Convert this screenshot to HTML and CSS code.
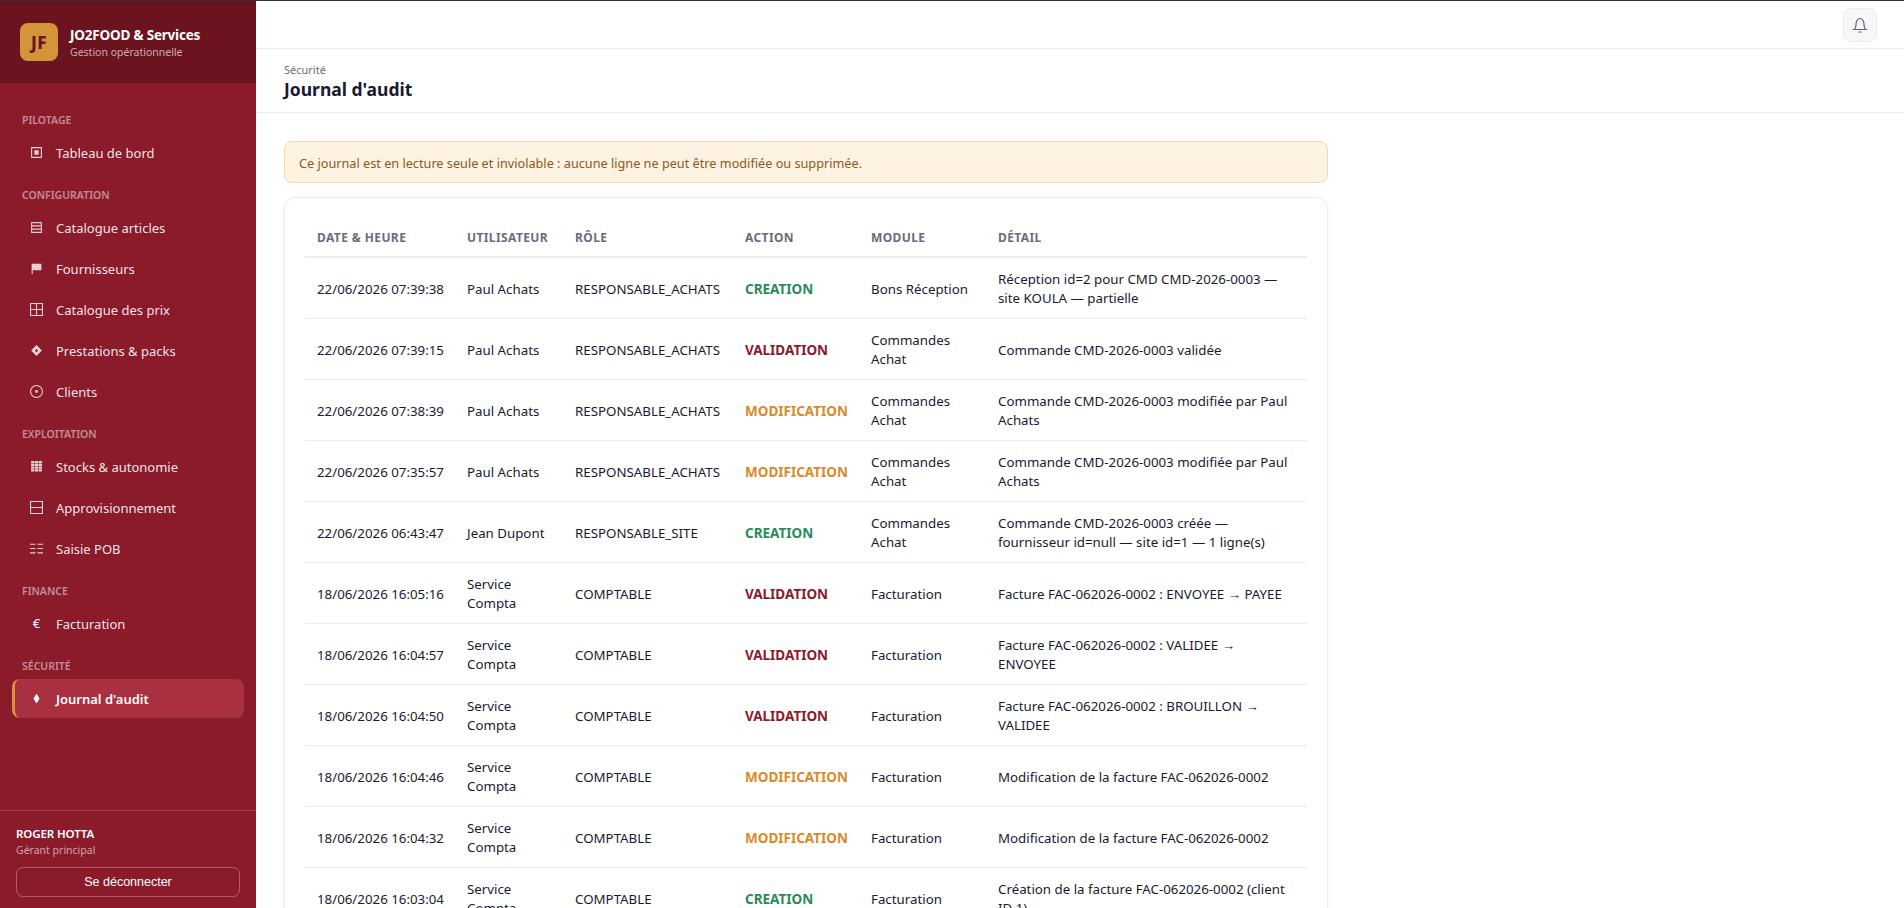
FILE: index.html
```html
<!DOCTYPE html>
<html lang="fr">
<head>
<meta charset="utf-8">
<title>Journal d'audit</title>
<link rel="stylesheet" href="styles.css">
</head>
<body>
<div class="topline"></div>
<div class="app">
  <aside class="sidebar">
    <div class="brand">
      <div class="logo">JF</div>
      <div>
        <div class="brand-name">JO2FOOD &amp; Services</div>
        <div class="brand-sub">Gestion opérationnelle</div>
      </div>
    </div>
    <nav class="nav">
      <div class="nav-label">PILOTAGE</div>
      <a class="nav-item"><svg class="ico" viewBox="0 0 12 12"><path fill="currentColor" fill-rule="evenodd" d="M1 1h10v10H1zM2 2v8h8V2zM4 4h4v4H4z"/></svg>Tableau de bord</a>
      <div class="nav-label">CONFIGURATION</div>
      <a class="nav-item"><svg class="ico" viewBox="0 0 12 12"><path fill="none" stroke="currentColor" d="M1.500 1.500h9v9h-9zM1.500 4.500h9M1.500 7.500h9"/></svg>Catalogue articles</a>
      <a class="nav-item"><svg class="ico" viewBox="0 0 12 12"><path fill="currentColor" d="M1.500 1.500h9v6h-8v3.500h-1z"/></svg>Fournisseurs</a>
      <a class="nav-item"><svg class="ico" viewBox="0 0 12 12"><path fill="none" stroke="currentColor" d="M.5.500h11v11H.5zM6 .5v11M.5 6h11"/></svg>Catalogue des prix</a>
      <a class="nav-item"><svg class="ico" viewBox="0 0 12 12"><path fill="currentColor" fill-rule="evenodd" d="M6 1l5 5-5 5-5-5zM6 4.500L4.500 6 6 7.500 7.500 6z"/></svg>Prestations &amp; packs</a>
      <a class="nav-item"><svg class="ico" viewBox="0 0 12 12"><circle cx="6" cy="6" r="5.500" fill="none" stroke="currentColor"/><circle cx="6" cy="6" r="1.300" fill="currentColor"/></svg>Clients</a>
      <div class="nav-label">EXPLOITATION</div>
      <a class="nav-item"><svg class="ico" viewBox="0 0 12 12"><path fill="currentColor" d="M1 1h3v2H1zM4.500 1h3v2h-3zM8 1h3v2H8zM1 3.500h3v2H1zM4.500 3.500h3v2h-3zM8 3.500h3v2H8zM1 6h3v2H1zM4.500 6h3v2h-3zM8 6h3v2H8zM1 8.500h3v2H1zM4.500 8.500h3v2h-3zM8 8.500h3v2H8z"/></svg>Stocks &amp; autonomie</a>
      <a class="nav-item"><svg class="ico" viewBox="0 0 12 12"><path fill="none" stroke="currentColor" d="M.5.500h11v11H.5zM.5 6h11"/></svg>Approvisionnement</a>
      <a class="nav-item"><svg class="ico" viewBox="0 0 12 12"><path fill="none" stroke="currentColor" d="M0 2h5M7 2h5M0 6h5M7 6h5M0 10h5M7 10h5"/></svg>Saisie POB</a>
      <div class="nav-label">FINANCE</div>
      <a class="nav-item"><span class="ico euro">€</span>Facturation</a>
      <div class="nav-label">SÉCURITÉ</div>
      <a class="nav-item active"><svg class="ico" viewBox="0 0 12 12"><path fill="currentColor" d="M6 1.500L8.800 6 6 10.500 3.200 6z"/></svg>Journal d'audit</a>
    </nav>
    <div class="user">
      <div class="user-name">ROGER HOTTA</div>
      <div class="user-role">Gérant principal</div>
      <button class="logout">Se déconnecter</button>
    </div>
  </aside>
  <div class="main">
    <header class="topbar">
      <button class="bell"><svg viewBox="0 0 16 16" width="16" height="16"><path fill="none" stroke="#5f5f70" stroke-width="1.200" d="M.8 12.500h14.400M2.800 12.500c.9-1.500 1.200-3 1.200-5.300C4 4.200 5.700 1.500 8 1.500s4 2.700 4 5.700c0 2.300.3 3.800 1.200 5.300M6.500 15h3"/></svg></button>
    </header>
    <div class="pagehead">
      <div class="crumb">Sécurité</div>
      <h1 class="title">Journal d'audit</h1>
    </div>
    <div class="content">
      <div class="alert">Ce journal est en lecture seule et inviolable : aucune ligne ne peut être modifiée ou supprimée.</div>
      <div class="card">
        <table class="table">
          <colgroup><col class="c1"><col class="c2"><col class="c3"><col class="c4"><col class="c5"><col></colgroup>
          <thead><tr><th>DATE &amp; HEURE</th><th>UTILISATEUR</th><th>RÔLE</th><th>ACTION</th><th>MODULE</th><th>DÉTAIL</th></tr></thead>
          <tbody>
            <tr><td class="nw">22/06/2026 07:39:38</td><td>Paul Achats</td><td class="nw">RESPONSABLE_ACHATS</td><td class="a-create">CREATION</td><td>Bons Réception</td><td>Réception id=2 pour CMD CMD-2026-0003 — site KOULA — partielle</td></tr>
            <tr><td class="nw">22/06/2026 07:39:15</td><td>Paul Achats</td><td class="nw">RESPONSABLE_ACHATS</td><td class="a-valid">VALIDATION</td><td>Commandes Achat</td><td>Commande CMD-2026-0003 validée</td></tr>
            <tr><td class="nw">22/06/2026 07:38:39</td><td>Paul Achats</td><td class="nw">RESPONSABLE_ACHATS</td><td class="a-modif">MODIFICATION</td><td>Commandes Achat</td><td>Commande CMD-2026-0003 modifiée par Paul Achats</td></tr>
            <tr><td class="nw">22/06/2026 07:35:57</td><td>Paul Achats</td><td class="nw">RESPONSABLE_ACHATS</td><td class="a-modif">MODIFICATION</td><td>Commandes Achat</td><td>Commande CMD-2026-0003 modifiée par Paul Achats</td></tr>
            <tr><td class="nw">22/06/2026 06:43:47</td><td>Jean Dupont</td><td class="nw">RESPONSABLE_SITE</td><td class="a-create">CREATION</td><td>Commandes Achat</td><td>Commande CMD-2026-0003 créée — fournisseur id=null — site id=1 — 1 ligne(s)</td></tr>
            <tr><td class="nw">18/06/2026 16:05:16</td><td>Service Compta</td><td class="nw">COMPTABLE</td><td class="a-valid">VALIDATION</td><td>Facturation</td><td>Facture FAC-062026-0002 : ENVOYEE → PAYEE</td></tr>
            <tr><td class="nw">18/06/2026 16:04:57</td><td>Service Compta</td><td class="nw">COMPTABLE</td><td class="a-valid">VALIDATION</td><td>Facturation</td><td>Facture FAC-062026-0002 : VALIDEE → ENVOYEE</td></tr>
            <tr><td class="nw">18/06/2026 16:04:50</td><td>Service Compta</td><td class="nw">COMPTABLE</td><td class="a-valid">VALIDATION</td><td>Facturation</td><td>Facture FAC-062026-0002 : BROUILLON → VALIDEE</td></tr>
            <tr><td class="nw">18/06/2026 16:04:46</td><td>Service Compta</td><td class="nw">COMPTABLE</td><td class="a-modif">MODIFICATION</td><td>Facturation</td><td>Modification de la facture FAC-062026-0002</td></tr>
            <tr><td class="nw">18/06/2026 16:04:32</td><td>Service Compta</td><td class="nw">COMPTABLE</td><td class="a-modif">MODIFICATION</td><td>Facturation</td><td>Modification de la facture FAC-062026-0002</td></tr>
            <tr><td class="nw">18/06/2026 16:03:04</td><td>Service Compta</td><td class="nw">COMPTABLE</td><td class="a-create">CREATION</td><td>Facturation</td><td>Création de la facture FAC-062026-0002 (client ID 1)</td></tr>
          </tbody>
        </table>
      </div>
    </div>
  </div>
</div>
</body>
</html>
```

FILE: styles.css
```css
* { box-sizing: border-box; }
html, body { margin: 0; height: 100%; overflow: hidden; }
body {
  font-family: "Noto Sans", "Open Sans", sans-serif;
  color: #1a1a2e;
  background: #fff;
  display: flex;
  flex-direction: column;
}
.topline { height: 1px; background: #333; flex: none; }
.app { flex: 1; display: flex; min-height: 0; }
.sidebar {
  width: 256px;
  flex: none;
  background: #8b1a2b;
  display: flex;
  flex-direction: column;
  color: #fff;
}
.brand {
  height: 82px;
  background: #6b141f;
  display: flex;
  align-items: center;
  gap: 12px;
  padding: 0 20px;
  flex: none;
}
.logo {
  width: 38px;
  height: 38px;
  border-radius: 8px;
  background: #d4943a;
  color: #6b141f;
  font-weight: 800;
  font-size: 17px;
  letter-spacing: .5px;
  display: flex;
  align-items: center;
  justify-content: center;
}
.brand-name { font-size: 13.500px; font-weight: 700; line-height: 19px; letter-spacing: -.2px; }
.brand-sub { font-size: 10.500px; line-height: 14px; color: rgba(255,255,255,.65); }
.nav { flex: 1; padding: 30px 12px 0; }
.nav-label {
  font-size: 10.500px;
  font-weight: 600;
  line-height: 14px;
  color: rgba(255,255,255,.5);
  padding-left: 10px;
  margin: 0 0 6px;
}
.nav-item {
  display: flex;
  align-items: center;
  height: 39px;
  margin-bottom: 2px;
  padding-left: 15px;
  font-size: 13px;
  border-radius: 8px;
  color: rgba(255,255,255,.9);
  border-left: 3px solid transparent;
}
.nav-item + .nav-label { margin-top: 16px; }
.ico { width: 13px; height: 13px; margin-right: 13px; flex: none; color: rgba(255,255,255,.8); }
.euro { font-size: 13px; line-height: 13px; text-align: center; color: #fff; }
.nav-item.active {
  background: #a83040;
  border-left-color: #d4943a;
  color: #fff;
  font-weight: 600;
}
.nav-item.active .ico { color: #fff; }
.user {
  flex: none;
  height: 98px;
  border-top: 1px solid rgba(255,255,255,.15);
  padding: 14px 16px 0;
}
.user-name { font-size: 11.500px; font-weight: 600; line-height: 17px; letter-spacing: -.1px; }
.user-role { font-size: 10.500px; line-height: 17px; color: rgba(255,255,255,.6); margin-bottom: 8px; }
.logout {
  display: block;
  width: 100%;
  height: 30px;
  border: 1px solid rgba(255,255,255,.3);
  border-radius: 7px;
  background: transparent;
  color: #fff;
  font-family: "Liberation Sans", sans-serif;
  font-size: 12.500px;
}
.main { flex: 1; min-width: 0; display: flex; flex-direction: column; overflow: hidden; }
.topbar {
  height: 48px;
  flex: none;
  border-bottom: 1px solid #ebebf0;
  display: flex;
  align-items: center;
  justify-content: flex-end;
  padding: 0 27px 0 0;
}
.bell {
  width: 34px;
  height: 34px;
  padding: 0;
  border: 1px solid #ebebf0;
  border-radius: 8px;
  background: #f7f7fa;
  display: flex;
  align-items: center;
  justify-content: center;
}
.pagehead {
  height: 64px;
  flex: none;
  border-bottom: 1px solid #ebebf0;
  padding: 13px 28px 0;
}
.crumb { font-size: 11px; line-height: 15px; color: #6b6b7b; }
.title { margin: 0; font-size: 17.500px; line-height: 25px; font-weight: 700; color: #1a1a2e; }
.content { padding: 28px; width: 1100px; flex: none; }
.alert {
  height: 42px;
  display: flex;
  align-items: center;
  padding: 2px 14px 0;
  background: #fef3e2;
  border: 1px solid #f5d9a8;
  border-radius: 8px;
  color: #8a5a1a;
  font-size: 12.700px;
  margin-bottom: 14px;
}
.card {
  border: 1px solid #ebebf0;
  border-radius: 12px;
  padding: 20px;
  box-shadow: 0 1px 6px rgba(0,0,0,.05);
}
.table { width: 100%; border-collapse: collapse; table-layout: fixed; font-size: 13.300px; }
.c1 { width: 150px; }
.c2 { width: 108px; }
.c3 { width: 170px; }
.c4 { width: 126px; }
.c5 { width: 127px; }
.table th {
  height: 39px;
  text-align: left;
  font-size: 12px;
  letter-spacing: .4px;
  font-weight: 700;
  color: #6b6b7b;
  padding: 0 12px;
  border-bottom: 2px solid #ebebf0;
  white-space: nowrap;
}
.table td {
  padding: 12px 12px 10px;
  line-height: 19px;
  border-bottom: 1px solid #ebebf0;
  vertical-align: middle;
}
.table td.nw { white-space: nowrap; }
.a-create, .a-valid, .a-modif { font-weight: 700; font-size: 13.500px; }
.a-create { color: #2a8a5a; }
.a-valid { color: #8b1a2b; }
.a-modif { color: #d98a2b; }
```
